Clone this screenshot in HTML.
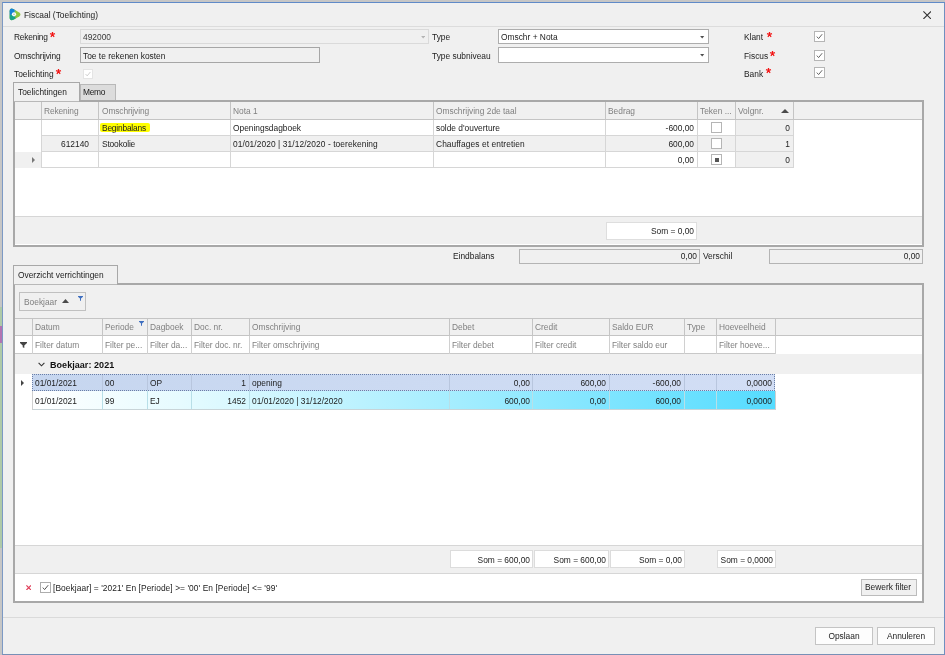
<!DOCTYPE html>
<html>
<head>
<meta charset="utf-8">
<title>Fiscaal (Toelichting)</title>
<style>
*{box-sizing:border-box;margin:0;padding:0}
html,body{width:945px;height:655px;overflow:hidden;background:#c6c6c6}
body{font-family:"Liberation Sans",sans-serif;font-size:8.4px;color:#1c1c1c;position:relative}
.a{position:absolute}
.t{position:absolute;white-space:nowrap;line-height:13px;height:13px}
.r{text-align:right}
.g{color:#808080}
.b{font-weight:bold;font-size:9px;letter-spacing:0.05px}
#win{left:2px;top:2px;width:943px;height:653px;background:#f0f0f0;border:1px solid #7c99c4;border-right-color:#6f8fc0;border-bottom-color:#7790b6;border-top-color:#5f8ac8}
.inp{position:absolute;background:#fff;border:1px solid #adadad}
.ro{position:absolute;background:#f0f0f0;border:1px solid #b0b0b0}
.cb{position:absolute;width:11px;height:11px;background:#fff;border:1px solid #b5b5b5}
.btn{position:absolute;background:#fdfdfd;border:1px solid #c4c4c4;text-align:center;line-height:17px}
.panel{position:absolute;border:2px solid #a8a8a8;background:#fff}
</style>
</head>
<body>
<div id="wrap" style="position:absolute;left:0;top:0;width:945px;height:655px;will-change:transform">
<div class="a" style="left:0;top:307px;width:2px;height:241px;background:#aecaa8"></div>
<div class="a" style="left:0;top:326px;width:2px;height:17px;background:#b274b2"></div>
<div class="a" id="win"></div>

<svg class="a" style="left:9px;top:8px" width="12" height="13" viewBox="0 0 12 13">
  <defs><clipPath id="tri"><path d="M0.6 3.2 C0.6 0.4 2.6 0 4.4 1 L10.2 4.5 C11.9 5.6 11.9 7.3 10.2 8.4 L4.4 11.8 C2.6 12.8 0.6 12.4 0.6 9.6 Z"/></clipPath></defs>
  <g clip-path="url(#tri)">
    <rect x="0" y="0" width="12" height="13" fill="#8cc63f"/>
    <path d="M5 6.3 L5.4 0 L0 0 L0 7.2 Z" fill="#1583d8"/>
    <path d="M5 6.3 L0 7.2 L0 13 L7.4 13 Z" fill="#16a389"/>
    <path d="M5 6.3 L5.4 0 L7.5 0 Z" fill="#3aa0c8"/>
    <path d="M5 6.3 L7.4 13 L9 13 Z" fill="#5ab56a"/>
  </g>
  <circle cx="5" cy="6.3" r="2.1" fill="#ffffff"/>
  <circle cx="5" cy="6.3" r="0.9" fill="#b9c0c4"/>
</svg>
<div class="t " style="left:24px;top:9px;">Fiscaal (Toelichting)</div>
<svg class="a" style="left:922.5px;top:10.5px" width="8.4" height="8.4" viewBox="0 0 8.4 8.4"><path d="M0.4 0.4 L8 8 M8 0.4 L0.4 8" stroke="#333" stroke-width="1.05" fill="none"/></svg>
<div class="a" style="left:3px;top:26px;width:941px;height:1px;background:#dcdcdc"></div>
<div class="t " style="left:14px;top:31px;letter-spacing:-0.2px">Rekening</div>
<svg class="a" style="left:49.2px;top:30.9px" width="7" height="7" viewBox="0 0 7 7"><g stroke="#f21414" stroke-width="1.3" stroke-linecap="butt"><path d="M3.5 0.9V3.5M3.5 3.5L1 2.7M3.5 3.5L6 2.7M3.5 3.5L1.9 5.8M3.5 3.5L5.1 5.8"/></g></svg>
<div class="ro" style="left:80px;top:29px;width:349px;height:15px;border-color:#dadada"></div>
<div class="t " style="left:83px;top:31px;color:#3a3a3a">492000</div>
<svg class="a" style="left:420.6px;top:36px" width="4.4" height="2.5" viewBox="0 0 5 3"><path d="M0 0H5L2.5 3Z" fill="#b4b4b4"/></svg>
<div class="t " style="left:14px;top:50px;letter-spacing:-0.15px">Omschrijving</div>
<div class="ro" style="left:80px;top:47px;width:240px;height:16px;border-color:#a6a6a6"></div>
<div class="t " style="left:83px;top:50px;">Toe te rekenen kosten</div>
<div class="t " style="left:14px;top:68px;">Toelichting</div>
<svg class="a" style="left:54.8px;top:67.7px" width="7" height="7" viewBox="0 0 7 7"><g stroke="#f21414" stroke-width="1.3" stroke-linecap="butt"><path d="M3.5 0.9V3.5M3.5 3.5L1 2.7M3.5 3.5L6 2.7M3.5 3.5L1.9 5.8M3.5 3.5L5.1 5.8"/></g></svg>
<div class="cb" style="left:83px;top:68.5px;width:10px;height:10px;border-color:#e4e4e4"><svg width="8" height="8" viewBox="0 0 9 9" style="position:absolute;left:0;top:0"><path d="M1.8 4.6L3.6 6.6L7.2 2.2" stroke="#c8c8c8" stroke-width="1" fill="none"/></svg></div>
<div class="t " style="left:432px;top:31px;">Type</div>
<div class="inp" style="left:498px;top:29px;width:211px;height:15px;"></div>
<div class="t " style="left:501px;top:31px;">Omschr + Nota</div>
<svg class="a" style="left:700.4px;top:36px" width="4.4" height="2.5" viewBox="0 0 5 3"><path d="M0 0H5L2.5 3Z" fill="#505050"/></svg>
<div class="t " style="left:432px;top:50px;">Type subniveau</div>
<div class="inp" style="left:498px;top:47px;width:211px;height:16px;"></div>
<svg class="a" style="left:700.4px;top:54.3px" width="4.4" height="2.5" viewBox="0 0 5 3"><path d="M0 0H5L2.5 3Z" fill="#505050"/></svg>
<div class="t " style="left:744px;top:31px;">Klant</div>
<svg class="a" style="left:765.5px;top:30.9px" width="7" height="7" viewBox="0 0 7 7"><g stroke="#f21414" stroke-width="1.3" stroke-linecap="butt"><path d="M3.5 0.9V3.5M3.5 3.5L1 2.7M3.5 3.5L6 2.7M3.5 3.5L1.9 5.8M3.5 3.5L5.1 5.8"/></g></svg>
<div class="t " style="left:744px;top:50px;">Fiscus</div>
<svg class="a" style="left:769.1px;top:49.7px" width="7" height="7" viewBox="0 0 7 7"><g stroke="#f21414" stroke-width="1.3" stroke-linecap="butt"><path d="M3.5 0.9V3.5M3.5 3.5L1 2.7M3.5 3.5L6 2.7M3.5 3.5L1.9 5.8M3.5 3.5L5.1 5.8"/></g></svg>
<div class="t " style="left:744px;top:68px;">Bank</div>
<svg class="a" style="left:765.0px;top:66.9px" width="7" height="7" viewBox="0 0 7 7"><g stroke="#f21414" stroke-width="1.3" stroke-linecap="butt"><path d="M3.5 0.9V3.5M3.5 3.5L1 2.7M3.5 3.5L6 2.7M3.5 3.5L1.9 5.8M3.5 3.5L5.1 5.8"/></g></svg>
<div class="cb" style="left:814px;top:31px;border-color:#b5b5b5"><svg width="9" height="9" viewBox="0 0 9 9" style="position:absolute;left:0;top:0"><path d="M1.8 4.6L3.6 6.6L7.2 2.2" stroke="#666" stroke-width="1" fill="none"/></svg></div>
<div class="cb" style="left:814px;top:50px;border-color:#b5b5b5"><svg width="9" height="9" viewBox="0 0 9 9" style="position:absolute;left:0;top:0"><path d="M1.8 4.6L3.6 6.6L7.2 2.2" stroke="#666" stroke-width="1" fill="none"/></svg></div>
<div class="cb" style="left:814px;top:67px;border-color:#b5b5b5"><svg width="9" height="9" viewBox="0 0 9 9" style="position:absolute;left:0;top:0"><path d="M1.8 4.6L3.6 6.6L7.2 2.2" stroke="#666" stroke-width="1" fill="none"/></svg></div>
<div class="a" style="left:80px;top:83.5px;width:36px;height:17.5px;background:#dcdcdc;border:1px solid #b8b8b8;border-bottom:none"></div>
<div class="t " style="left:83px;top:86px;letter-spacing:-0.3px">Memo</div>
<div class="a" style="left:13px;top:82px;width:67px;height:19px;background:#f0f0f0;border:1px solid #a8a8a8;border-bottom:none;z-index:3"></div>
<div class="a" style="left:14px;top:101px;width:65px;height:1px;background:#b8b8b8;z-index:3"></div>
<div class="t " style="left:18px;top:86px;z-index:4">Toelichtingen</div>
<div class="panel" style="left:13px;top:100px;width:911px;height:147px;"></div>
<div class="a" style="left:15px;top:102px;width:907px;height:17px;background:#f0f0f0"></div>
<div class="a" style="left:15px;top:119px;width:907px;height:1px;background:#c4c4c4"></div>
<div class="a" style="left:41px;top:102px;width:1px;height:18px;background:#c4c4c4"></div>
<div class="a" style="left:98px;top:102px;width:1px;height:18px;background:#c4c4c4"></div>
<div class="a" style="left:230px;top:102px;width:1px;height:18px;background:#c4c4c4"></div>
<div class="a" style="left:433px;top:102px;width:1px;height:18px;background:#c4c4c4"></div>
<div class="a" style="left:605px;top:102px;width:1px;height:18px;background:#c4c4c4"></div>
<div class="a" style="left:697px;top:102px;width:1px;height:18px;background:#c4c4c4"></div>
<div class="a" style="left:735px;top:102px;width:1px;height:18px;background:#c4c4c4"></div>
<div class="a" style="left:793px;top:102px;width:1px;height:18px;background:#c4c4c4"></div>
<div class="t g" style="left:44px;top:105px;letter-spacing:-0.12px">Rekening</div>
<div class="t g" style="left:102px;top:105px;letter-spacing:-0.12px">Omschrijving</div>
<div class="t g" style="left:233px;top:105px;">Nota 1</div>
<div class="t g" style="left:436px;top:105px;">Omschrijving 2de taal</div>
<div class="t g" style="left:608px;top:105px;">Bedrag</div>
<div class="t g" style="left:700px;top:105px;">Teken ...</div>
<div class="t g" style="left:738px;top:105px;">Volgnr.</div>
<svg class="a" style="left:781px;top:109px" width="8" height="4" viewBox="0 0 8 4"><path d="M0 4H8L4 0Z" fill="#4a4a4a"/></svg>
<div class="a" style="left:735px;top:120px;width:58px;height:16px;background:#f0f0f0"></div>
<div class="a" style="left:41px;top:135px;width:753px;height:1px;background:#d6d6d6"></div>
<div class="a" style="left:41px;top:120px;width:1px;height:16px;background:#d6d6d6"></div>
<div class="a" style="left:98px;top:120px;width:1px;height:16px;background:#d6d6d6"></div>
<div class="a" style="left:230px;top:120px;width:1px;height:16px;background:#d6d6d6"></div>
<div class="a" style="left:433px;top:120px;width:1px;height:16px;background:#d6d6d6"></div>
<div class="a" style="left:605px;top:120px;width:1px;height:16px;background:#d6d6d6"></div>
<div class="a" style="left:697px;top:120px;width:1px;height:16px;background:#d6d6d6"></div>
<div class="a" style="left:735px;top:120px;width:1px;height:16px;background:#d6d6d6"></div>
<div class="a" style="left:793px;top:120px;width:1px;height:16px;background:#d6d6d6"></div>
<div class="a" style="left:41px;top:136px;width:752px;height:16px;background:#f0f0f0"></div>
<div class="a" style="left:735px;top:136px;width:58px;height:16px;background:#f0f0f0"></div>
<div class="a" style="left:41px;top:151px;width:753px;height:1px;background:#d6d6d6"></div>
<div class="a" style="left:41px;top:136px;width:1px;height:16px;background:#d6d6d6"></div>
<div class="a" style="left:98px;top:136px;width:1px;height:16px;background:#d6d6d6"></div>
<div class="a" style="left:230px;top:136px;width:1px;height:16px;background:#d6d6d6"></div>
<div class="a" style="left:433px;top:136px;width:1px;height:16px;background:#d6d6d6"></div>
<div class="a" style="left:605px;top:136px;width:1px;height:16px;background:#d6d6d6"></div>
<div class="a" style="left:697px;top:136px;width:1px;height:16px;background:#d6d6d6"></div>
<div class="a" style="left:735px;top:136px;width:1px;height:16px;background:#d6d6d6"></div>
<div class="a" style="left:793px;top:136px;width:1px;height:16px;background:#d6d6d6"></div>
<div class="a" style="left:735px;top:152px;width:58px;height:16px;background:#f0f0f0"></div>
<div class="a" style="left:41px;top:167px;width:753px;height:1px;background:#d6d6d6"></div>
<div class="a" style="left:41px;top:152px;width:1px;height:16px;background:#d6d6d6"></div>
<div class="a" style="left:98px;top:152px;width:1px;height:16px;background:#d6d6d6"></div>
<div class="a" style="left:230px;top:152px;width:1px;height:16px;background:#d6d6d6"></div>
<div class="a" style="left:433px;top:152px;width:1px;height:16px;background:#d6d6d6"></div>
<div class="a" style="left:605px;top:152px;width:1px;height:16px;background:#d6d6d6"></div>
<div class="a" style="left:697px;top:152px;width:1px;height:16px;background:#d6d6d6"></div>
<div class="a" style="left:735px;top:152px;width:1px;height:16px;background:#d6d6d6"></div>
<div class="a" style="left:793px;top:152px;width:1px;height:16px;background:#d6d6d6"></div>
<div class="a" style="left:15px;top:152px;width:26px;height:16px;background:#f0f0f0"></div>
<svg class="a" style="left:32px;top:157px" width="3" height="6" viewBox="0 0 3 6"><path d="M0 0L3 3L0 6Z" fill="#777"/></svg>
<div class="a" style="left:100px;top:123px;width:50px;height:9px;background:#ffff00;border-radius:2px"></div>
<div class="t " style="left:102px;top:122px;letter-spacing:-0.2px">Beginbalans</div>
<div class="t " style="left:233px;top:122px;">Openingsdagboek</div>
<div class="t " style="left:436px;top:122px;">solde d'ouverture</div>
<div class="t r " style="left:574px;width:120px;top:122px;">-600,00</div>
<div class="t r " style="left:670px;width:120px;top:122px;">0</div>
<div class="t r " style="left:-31px;width:120px;top:138px;">612140</div>
<div class="t " style="left:102px;top:138px;letter-spacing:-0.15px">Stookolie</div>
<div class="t " style="left:233px;top:138px;letter-spacing:0.08px">01/01/2020 | 31/12/2020 - toerekening</div>
<div class="t " style="left:436px;top:138px;letter-spacing:0.08px">Chauffages et entretien</div>
<div class="t r " style="left:574px;width:120px;top:138px;">600,00</div>
<div class="t r " style="left:670px;width:120px;top:138px;">1</div>
<div class="t r " style="left:574px;width:120px;top:154px;">0,00</div>
<div class="t r " style="left:670px;width:120px;top:154px;">0</div>
<div class="cb" style="left:711px;top:122px;width:11px;height:11px;"></div>
<div class="cb" style="left:711px;top:138px;width:11px;height:11px;"></div>
<div class="cb" style="left:711px;top:154px;width:11px;height:11px;"></div>
<div class="a" style="left:715px;top:158px;width:4px;height:4px;background:#555"></div>
<div class="a" style="left:15px;top:217px;width:907px;height:27px;background:#f0f0f0"></div>
<div class="a" style="left:15px;top:216px;width:907px;height:1px;background:#d6d6d6"></div>
<div class="a" style="left:606px;top:222px;width:91px;height:18px;background:#fff;border:1px solid #dedede"></div>
<div class="t r " style="left:574px;width:120px;top:225px;">Som = 0,00</div>
<div class="t " style="left:453px;top:250px;">Eindbalans</div>
<div class="ro" style="left:519px;top:249px;width:181px;height:15px;border-color:#b4b4b4"></div>
<div class="t r " style="left:577px;width:120px;top:250px;">0,00</div>
<div class="t " style="left:703px;top:250px;">Verschil</div>
<div class="ro" style="left:769px;top:249px;width:154px;height:15px;border-color:#b4b4b4"></div>
<div class="t r " style="left:800px;width:120px;top:250px;">0,00</div>
<div class="a" style="left:13px;top:265px;width:105px;height:19px;background:#f0f0f0;border:1px solid #a8a8a8;border-bottom:none;z-index:3"></div>
<div class="a" style="left:14px;top:284px;width:103px;height:1px;background:#b8b8b8;z-index:3"></div>
<div class="t " style="left:18px;top:269px;z-index:4">Overzicht verrichtingen</div>
<div class="panel" style="left:13px;top:283px;width:911px;height:320px;"></div>
<div class="a" style="left:15px;top:285px;width:907px;height:33px;background:#f0f0f0"></div>
<div class="a" style="left:19px;top:292px;width:67px;height:19px;background:#f0f0f0;border:1px solid #c0c0c0"></div>
<div class="t g" style="left:24px;top:296px;">Boekjaar</div>
<svg class="a" style="left:62px;top:299px" width="7" height="4" viewBox="0 0 7 4"><path d="M0 4H7L3.5 0Z" fill="#4a4a4a"/></svg>
<svg class="a" style="left:78px;top:296px" width="5" height="5" viewBox="0 0 5 5"><path d="M0 0H5V0.8L3 2.6V5L2 4.4V2.6L0 0.8Z" fill="#3f6fc0"/></svg>
<div class="a" style="left:15px;top:318px;width:907px;height:1px;background:#c4c4c4"></div>
<div class="a" style="left:15px;top:319px;width:907px;height:17px;background:#f0f0f0"></div>
<div class="a" style="left:15px;top:335px;width:907px;height:1px;background:#c4c4c4"></div>
<div class="a" style="left:32px;top:319px;width:1px;height:17px;background:#c4c4c4"></div>
<div class="a" style="left:102px;top:319px;width:1px;height:17px;background:#c4c4c4"></div>
<div class="a" style="left:147px;top:319px;width:1px;height:17px;background:#c4c4c4"></div>
<div class="a" style="left:191px;top:319px;width:1px;height:17px;background:#c4c4c4"></div>
<div class="a" style="left:249px;top:319px;width:1px;height:17px;background:#c4c4c4"></div>
<div class="a" style="left:449px;top:319px;width:1px;height:17px;background:#c4c4c4"></div>
<div class="a" style="left:532px;top:319px;width:1px;height:17px;background:#c4c4c4"></div>
<div class="a" style="left:609px;top:319px;width:1px;height:17px;background:#c4c4c4"></div>
<div class="a" style="left:684px;top:319px;width:1px;height:17px;background:#c4c4c4"></div>
<div class="a" style="left:716px;top:319px;width:1px;height:17px;background:#c4c4c4"></div>
<div class="a" style="left:775px;top:319px;width:1px;height:17px;background:#c4c4c4"></div>
<div class="t g" style="left:35px;top:321px;">Datum</div>
<div class="t g" style="left:105px;top:321px;">Periode</div>
<div class="t g" style="left:150px;top:321px;">Dagboek</div>
<div class="t g" style="left:194px;top:321px;">Doc. nr.</div>
<div class="t g" style="left:252px;top:321px;">Omschrijving</div>
<div class="t g" style="left:452px;top:321px;">Debet</div>
<div class="t g" style="left:535px;top:321px;">Credit</div>
<div class="t g" style="left:612px;top:321px;">Saldo EUR</div>
<div class="t g" style="left:687px;top:321px;">Type</div>
<div class="t g" style="left:719px;top:321px;">Hoeveelheid</div>
<svg class="a" style="left:139px;top:321px" width="5" height="5" viewBox="0 0 5 5"><path d="M0 0H5V0.8L3 2.6V5L2 4.4V2.6L0 0.8Z" fill="#3f6fc0"/></svg>
<div class="a" style="left:15px;top:353px;width:761px;height:1px;background:#c8c8c8"></div>
<div class="a" style="left:32px;top:336px;width:1px;height:18px;background:#d0d0d0"></div>
<div class="a" style="left:102px;top:336px;width:1px;height:18px;background:#d0d0d0"></div>
<div class="a" style="left:147px;top:336px;width:1px;height:18px;background:#d0d0d0"></div>
<div class="a" style="left:191px;top:336px;width:1px;height:18px;background:#d0d0d0"></div>
<div class="a" style="left:249px;top:336px;width:1px;height:18px;background:#d0d0d0"></div>
<div class="a" style="left:449px;top:336px;width:1px;height:18px;background:#d0d0d0"></div>
<div class="a" style="left:532px;top:336px;width:1px;height:18px;background:#d0d0d0"></div>
<div class="a" style="left:609px;top:336px;width:1px;height:18px;background:#d0d0d0"></div>
<div class="a" style="left:684px;top:336px;width:1px;height:18px;background:#d0d0d0"></div>
<div class="a" style="left:716px;top:336px;width:1px;height:18px;background:#d0d0d0"></div>
<div class="a" style="left:775px;top:336px;width:1px;height:18px;background:#d0d0d0"></div>
<svg class="a" style="left:19.5px;top:341.5px" width="7" height="6" viewBox="0 0 7 6"><path d="M0 0H7V0.9L4.3 3.4V6L2.7 5.2V3.4L0 0.9Z" fill="#444"/></svg>
<div class="t g" style="left:35px;top:339px;">Filter datum</div>
<div class="t g" style="left:105px;top:339px;">Filter pe...</div>
<div class="t g" style="left:150px;top:339px;">Filter da...</div>
<div class="t g" style="left:194px;top:339px;">Filter doc. nr.</div>
<div class="t g" style="left:252px;top:339px;">Filter omschrijving</div>
<div class="t g" style="left:452px;top:339px;">Filter debet</div>
<div class="t g" style="left:535px;top:339px;">Filter credit</div>
<div class="t g" style="left:612px;top:339px;">Filter saldo eur</div>
<div class="t g" style="left:719px;top:339px;">Filter hoeve...</div>
<div class="a" style="left:15px;top:354px;width:907px;height:20px;background:#f0f0f0"></div>
<svg class="a" style="left:38px;top:362px" width="7" height="5" viewBox="0 0 7 5"><path d="M0.6 0.8L3.5 3.8L6.4 0.8" stroke="#333" stroke-width="1.1" fill="none"/></svg>
<div class="t b" style="left:50px;top:359px;color:#111">Boekjaar: 2021</div>
<div class="a" style="left:15px;top:374px;width:17px;height:35px;background:#fff"></div>
<div class="a" style="left:32px;top:374px;width:743px;height:17px;background:linear-gradient(90deg,#c6d6ef,#d2def5);border:1px dotted #6a7ea6"></div>
<div class="a" style="left:32px;top:391px;width:743px;height:19px;background:linear-gradient(90deg,#ffffff 0%,#e6fbff 20%,#a8eeff 55%,#55dcff 100%)"></div>
<div class="a" style="left:32px;top:409px;width:743px;height:1px;background:#c8d4d8"></div>
<div class="a" style="left:102px;top:375px;width:1px;height:15px;background:#b8c6de"></div>
<div class="a" style="left:102px;top:391px;width:1px;height:18px;background:#b8dfe8"></div>
<div class="a" style="left:147px;top:375px;width:1px;height:15px;background:#b8c6de"></div>
<div class="a" style="left:147px;top:391px;width:1px;height:18px;background:#b8dfe8"></div>
<div class="a" style="left:191px;top:375px;width:1px;height:15px;background:#b8c6de"></div>
<div class="a" style="left:191px;top:391px;width:1px;height:18px;background:#b8dfe8"></div>
<div class="a" style="left:249px;top:375px;width:1px;height:15px;background:#b8c6de"></div>
<div class="a" style="left:249px;top:391px;width:1px;height:18px;background:#b8dfe8"></div>
<div class="a" style="left:449px;top:375px;width:1px;height:15px;background:#b8c6de"></div>
<div class="a" style="left:449px;top:391px;width:1px;height:18px;background:#b8dfe8"></div>
<div class="a" style="left:532px;top:375px;width:1px;height:15px;background:#b8c6de"></div>
<div class="a" style="left:532px;top:391px;width:1px;height:18px;background:#b8dfe8"></div>
<div class="a" style="left:609px;top:375px;width:1px;height:15px;background:#b8c6de"></div>
<div class="a" style="left:609px;top:391px;width:1px;height:18px;background:#b8dfe8"></div>
<div class="a" style="left:684px;top:375px;width:1px;height:15px;background:#b8c6de"></div>
<div class="a" style="left:684px;top:391px;width:1px;height:18px;background:#b8dfe8"></div>
<div class="a" style="left:716px;top:375px;width:1px;height:15px;background:#b8c6de"></div>
<div class="a" style="left:716px;top:391px;width:1px;height:18px;background:#b8dfe8"></div>
<div class="a" style="left:32px;top:391px;width:1px;height:19px;background:#d0d0d0"></div>
<div class="a" style="left:775px;top:391px;width:1px;height:19px;background:#d0d0d0"></div>
<svg class="a" style="left:21px;top:380px" width="3" height="6" viewBox="0 0 3 6"><path d="M0 0L3 3L0 6Z" fill="#444"/></svg>
<div class="t " style="left:35px;top:377px;">01/01/2021</div>
<div class="t " style="left:105px;top:377px;">00</div>
<div class="t " style="left:150px;top:377px;">OP</div>
<div class="t r " style="left:126px;width:120px;top:377px;">1</div>
<div class="t " style="left:252px;top:377px;">opening</div>
<div class="t r " style="left:410px;width:120px;top:377px;">0,00</div>
<div class="t r " style="left:486px;width:120px;top:377px;">600,00</div>
<div class="t r " style="left:561px;width:120px;top:377px;">-600,00</div>
<div class="t r " style="left:652px;width:120px;top:377px;">0,0000</div>
<div class="t " style="left:35px;top:395px;">01/01/2021</div>
<div class="t " style="left:105px;top:395px;">99</div>
<div class="t " style="left:150px;top:395px;">EJ</div>
<div class="t r " style="left:126px;width:120px;top:395px;">1452</div>
<div class="t " style="left:252px;top:395px;">01/01/2020 | 31/12/2020</div>
<div class="t r " style="left:410px;width:120px;top:395px;">600,00</div>
<div class="t r " style="left:486px;width:120px;top:395px;">0,00</div>
<div class="t r " style="left:561px;width:120px;top:395px;">600,00</div>
<div class="t r " style="left:652px;width:120px;top:395px;">0,0000</div>
<div class="a" style="left:15px;top:545px;width:907px;height:1px;background:#d6d6d6"></div>
<div class="a" style="left:15px;top:546px;width:907px;height:27px;background:#f0f0f0"></div>
<div class="a" style="left:15px;top:573px;width:907px;height:1px;background:#d6d6d6"></div>
<div class="a" style="left:450px;top:550px;width:83px;height:18px;background:#fff;border:1px solid #dcdcdc"></div>
<div class="t r " style="left:410px;width:120px;top:554px;">Som = 600,00</div>
<div class="a" style="left:534px;top:550px;width:75px;height:18px;background:#fff;border:1px solid #dcdcdc"></div>
<div class="t r " style="left:486px;width:120px;top:554px;">Som = 600,00</div>
<div class="a" style="left:610px;top:550px;width:75px;height:18px;background:#fff;border:1px solid #dcdcdc"></div>
<div class="t r " style="left:562px;width:120px;top:554px;">Som = 0,00</div>
<div class="a" style="left:717px;top:550px;width:59px;height:18px;background:#fff;border:1px solid #dcdcdc"></div>
<div class="t r " style="left:653px;width:120px;top:554px;">Som = 0,0000</div>
<svg class="a" style="left:26px;top:584.5px" width="5.4" height="5.4" viewBox="0 0 5.4 5.4"><path d="M0.4 0.4L5 5M5 0.4L0.4 5" stroke="#e0405a" stroke-width="1.2"/></svg>
<div class="cb" style="left:40px;top:582px;border-color:#adadad"><svg width="9" height="9" viewBox="0 0 9 9" style="position:absolute;left:0;top:0"><path d="M1.8 4.6L3.6 6.6L7.2 2.2" stroke="#555" stroke-width="1" fill="none"/></svg></div>
<div class="t " style="left:53px;top:582px;letter-spacing:0.07px">[Boekjaar] = '2021' En [Periode] &gt;= '00' En [Periode] &lt;= '99'</div>
<div class="a" style="left:861px;top:579px;width:56px;height:17px;background:#f0f0f0;border:1px solid #bcbcbc"></div>
<div class="t" style="left:860px;top:581px;width:56px;text-align:center">Bewerk filter</div>
<div class="a" style="left:3px;top:617px;width:941px;height:1px;background:#dadada"></div>
<div class="btn" style="left:815px;top:627px;width:58px;height:18px">Opslaan</div>
<div class="btn" style="left:877px;top:627px;width:58px;height:18px">Annuleren</div>
</div>
</body>
</html>
